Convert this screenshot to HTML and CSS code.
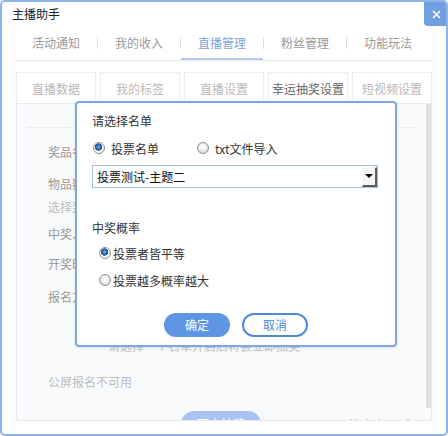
FILE: index.html
```html
<!DOCTYPE html>
<html lang="zh-CN">
<head>
<meta charset="utf-8">
<title>主播助手</title>
<link rel="stylesheet" href="styles.css">
</head>
<body>
<div class="window">
  <div class="titlebar">主播助手</div>
  <div class="close">
    <svg width="9" height="9" viewBox="0 0 9 9"><path d="M1 1 L8 8 M8 1 L1 8" stroke="#fff" stroke-width="1.6" fill="none"/></svg>
  </div>
  <nav class="tabs">
    <span class="tab">活动通知</span><span class="sep"></span>
    <span class="tab">我的收入</span><span class="sep"></span>
    <span class="tab active">直播管理</span><span class="sep"></span>
    <span class="tab">粉丝管理</span><span class="sep"></span>
    <span class="tab">功能玩法</span>
  </nav>
  <div class="subtabs">
    <span class="subtab">直播数据</span>
    <span class="subtab">我的标签</span>
    <span class="subtab">直播设置</span>
    <span class="subtab active">幸运抽奖设置</span>
    <span class="subtab">短视频设置</span>
  </div>
  <div class="panel">
    <div class="panel-body">
      <div class="rule"></div>
      <div class="label r1">奖品名称</div>
      <div class="label r2">物品数量</div>
      <div class="label light r3">选择奖品</div>
      <div class="label r4">中奖人数</div>
      <div class="label r5">开奖时间</div>
      <div class="label r6">报名方式</div>
      <div class="hint">请选择一个名单开启后将会立即抽奖</div>
      <div class="label light r7">公屏报名不可用</div>
      <div class="action-row">
        <span class="open-btn">开启抽奖</span>
        <span class="notice">注意事项</span>
        <span class="notice-icon">?</span>
      </div>
    </div>
    <div class="scrollbar"></div>
  </div>

  <div class="dialog">
    <div class="d-title">请选择名单</div>
    <div class="radio-row">
      <span class="opt"><span class="radio on"></span><span>投票名单</span></span>
      <span class="opt second"><span class="radio"></span><span>txt文件导入</span></span>
    </div>
    <div class="select">
      <span class="select-text">投票测试-主题二</span>
      <span class="select-btn"></span>
    </div>
    <div class="d-title prob">中奖概率</div>
    <div class="opt stack first"><span class="radio on"></span><span>投票者皆平等</span></div>
    <div class="opt stack"><span class="radio"></span><span>投票越多概率越大</span></div>
    <div class="buttons">
      <span class="btn primary">确定</span>
      <span class="btn ghost">取消</span>
    </div>
  </div>
</div>
</body>
</html>
```
FILE: styles.css
```css
* { box-sizing: border-box; }
html, body { margin: 0; padding: 0; }
body {
  font-family: "Noto Sans CJK SC", "Microsoft YaHei", "Noto Sans", sans-serif;
  font-size: 12px;
  background: #fff;
}
.window {
  position: relative;
  width: 448px;
  height: 436px;
  border: 2px solid #8db5e9;
  border-radius: 5px;
  background: #fff;
  overflow: hidden;
}
.titlebar {
  height: 24px;
  line-height: 23px;
  padding-left: 10px;
  color: #222;
}
.close {
  position: absolute;
  top: -2px;
  right: -2px;
  width: 24px;
  height: 26px;
  background: #729fe0;
  border-bottom-left-radius: 4px;
  display: flex;
  align-items: center;
  justify-content: center;
  padding-top: 3px;
}
.tabs {
  display: flex;
  align-items: center;
  height: 35px;
  margin: 0 14px 0 13px;
  border-bottom: 1px solid #e6e9f0;
}
.tab {
  width: 82px;
  height: 34px;
  line-height: 34px;
  text-align: center;
  color: #999;
}
.tab.active {
  color: #7da3dd;
  box-shadow: inset 0 -2px 0 #b8c8ef;
}
.sep {
  width: 1px;
  height: 12px;
  background: #dedede;
}
.subtabs {
  display: flex;
  gap: 4px;
  margin: 11px 14px 0;
}
.subtab {
  width: 80px;
  height: 31px;
  line-height: 31px;
  text-align: center;
  color: #b8b8b8;
  border: 1px solid #eceef2;
  border-bottom: none;
  background: #fff;
}
.subtab.active { color: #666; }
.panel {
  display: flex;
  height: 318px;
  margin: 0 14px;
  border: 1px solid #e9ebf0;
  background: #f9fafc;
}
.panel-body {
  flex: 1;
  overflow: hidden;
  padding-left: 10px;
}
.scrollbar {
  width: 5px;
  height: 304px;
  background: #e1e1e1;
}
.rule {
  height: 1px;
  margin: 23px 9px 0 0;
  background: #eceef2;
}
.label {
  height: 20px;
  line-height: 20px;
  margin-left: 21px;
  color: #999;
  white-space: nowrap;
}
.label.light { color: #bdbdbd; }
.r1 { margin-top: 14px; }
.r2 { margin-top: 12px; }
.r3 { margin-top: 3px; }
.r4 { margin-top: 7px; }
.r5 { margin-top: 10px; }
.r6 { margin-top: 13px; }
.hint {
  height: 20px;
  line-height: 20px;
  margin: 29px 0 0 81px;
  color: #c4c4c4;
  white-space: nowrap;
}
.r7 { margin-top: 16px; }
.action-row {
  display: flex;
  align-items: center;
  margin: 19px 0 0 154px;
  height: 26px;
}
.open-btn {
  width: 80px;
  height: 26px;
  line-height: 26px;
  border-radius: 13px;
  background: #a9c4f2;
  color: #fff;
  text-align: center;
}
.notice {
  margin-left: 88px;
  color: #aaa;
}
.notice-icon {
  margin-left: 6px;
  width: 10px;
  height: 10px;
  border-radius: 50%;
  border: 1px solid #ccc;
  color: #ccc;
  font-size: 8px;
  line-height: 8px;
  text-align: center;
}
.dialog {
  position: absolute;
  left: 73px;
  top: 99px;
  width: 322px;
  height: 246px;
  border: 2px solid #7ea8df;
  border-radius: 4px;
  background: #fff;
  padding: 8px 0 0 15px;
  box-shadow: 0 1px 3px rgba(60, 90, 140, 0.15);
  color: #333;
}
.d-title {
  height: 20px;
  line-height: 20px;
}
.radio-row {
  display: flex;
  align-items: center;
  height: 20px;
  margin-top: 7px;
}
.opt {
  display: flex;
  align-items: center;
  gap: 6px;
  margin-left: 1px;
}
.opt.second { margin-left: 38px; }
.radio {
  display: inline-block;
  width: 12px;
  height: 12px;
  border-radius: 50%;
  border: 1px solid #8b9097;
  background: radial-gradient(circle at 50% 40%, #ffffff 0, #f2f2f2 3px, #d6d6d6 6px);
}
.radio.on {
  background: radial-gradient(circle at 45% 40%, #8cc0ee 0, #3a7cc0 1.6px, #1b5290 3.4px, #ffffff 4px, #eeeeee 6px);
}
.select {
  display: flex;
  align-items: center;
  width: 286px;
  height: 23px;
  margin-top: 7px;
  padding-left: 4px;
  border: 1px solid #a5bfe0;
}
.select-text {
  flex: 1;
  color: #111;
}
.select-btn {
  display: flex;
  align-items: center;
  justify-content: center;
  width: 15px;
  height: 20px;
  background: #f6f6f6;
  border-top: 1px solid #fafafa;
  border-left: 1px solid #fafafa;
  border-right: 2px solid #5c5c5c;
  border-bottom: 2px solid #5c5c5c;
}
.select-btn::after {
  content: "";
  border-left: 4px solid transparent;
  border-right: 4px solid transparent;
  border-top: 4px solid #000;
}
.prob { margin-top: 30px; }
.opt.stack {
  height: 20px;
  gap: 2px;
  margin-left: 7px;
}
.opt.stack.first { margin-top: 5px; }
.opt.stack + .opt.stack { margin-top: 7px; }
.buttons {
  display: flex;
  gap: 12px;
  margin: 23px 0 0 72px;
}
.btn {
  width: 66px;
  height: 24px;
  line-height: 24px;
  border-radius: 12px;
  text-align: center;
}
.btn.primary {
  background: #5e96e3;
  color: #fff;
}
.btn.ghost {
  border: 2px solid #4f89da;
  line-height: 20px;
  color: #4f89da;
  background: #fff;
}
```
